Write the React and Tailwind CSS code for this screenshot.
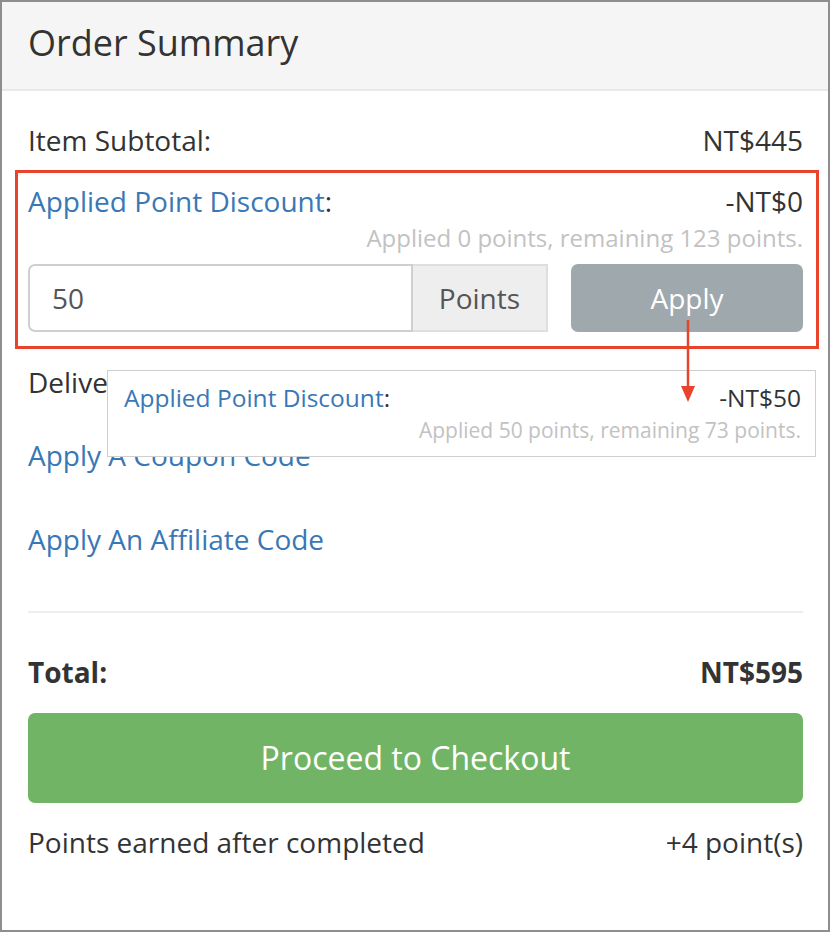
import React from "react";

export default function App() {
  const font = { fontFamily: '"Open Sans", "Noto Sans", sans-serif' };
  return (
    <div
      className="relative w-[830px] h-[932px] border-2 border-[#8e8e8e] bg-white text-[#333] overflow-hidden"
      style={font}
    >
      {/* Header */}
      <div className="h-[89px] bg-[#f5f5f5] border-b-2 border-[#e9e9e9] pl-[26px] pt-[21px]">
        <div className="text-[36px] leading-[40px]">Order Summary</div>
      </div>

      {/* Body */}
      <div className="pl-[26px] pr-[25px] pt-[29px] text-[28px] leading-[40px]">
        <div className="flex justify-between">
          <span>Item Subtotal:</span>
          <span>NT$445</span>
        </div>

        <div className="mt-[10px] -ml-[13px] -mr-[16px] border-[3px] border-[#e8432b] pl-[10px] pr-[13px] pt-[8px] pb-[14px]">
          <div className="flex justify-between">
            <span>
              <span className="text-[#3a77b5]">Applied Point Discount</span>:
            </span>
            <span>-NT$0</span>
          </div>
          <div className="text-right text-[24px] leading-[34px] text-[#c2c2c2]">
            Applied 0 points, remaining 123 points.
          </div>
          <div className="mt-[9px] flex h-[68px]">
            <div className="w-[385px] h-full border-2 border-[#cfcfcf] rounded-l-[7px] pl-[22px] flex items-center text-[28px] text-[#555]">
              50
            </div>
            <div className="w-[135px] h-full border-2 border-l-0 border-[#dedede] bg-[#eeeeee] flex items-center justify-center text-[28px] text-[#555]">
              Points
            </div>
            <div className="ml-[23px] flex-1 h-full rounded-[7px] bg-[#9fa8ad] flex items-center justify-center text-[28px] text-white">
              Apply
            </div>
          </div>
        </div>

        <div className="mt-[13px] flex justify-between">
          <span>Delivery Fee:</span>
        </div>

        <div className="mt-[33px] text-[#3a77b5]">Apply A Coupon Code</div>
        <div className="mt-[44px] text-[#3a77b5]">Apply An Affiliate Code</div>

        <div className="mt-[52px] border-t-2 border-[#eeeeee]" />

        <div className="mt-[39px] flex justify-between font-bold">
          <span>Total:</span>
          <span>NT$595</span>
        </div>

        <div className="mt-[21px] h-[90px] rounded-[7px] bg-[#72b466] flex items-center justify-center text-[32px] text-white">
          Proceed to Checkout
        </div>

        <div className="mt-[19px] flex justify-between">
          <span>Points earned after completed</span>
          <span>+4 point(s)</span>
        </div>
      </div>

      {/* Overlay result card */}
      <div className="absolute left-[105px] top-[368px] w-[709px] h-[87px] bg-white border border-[#cfcfcf] pl-[16px] pr-[14px] pt-[9px]">
        <div className="flex justify-between text-[24.5px] leading-[35px]">
          <span>
            <span className="text-[#3a77b5]">Applied Point Discount</span>:
          </span>
          <span>-NT$50</span>
        </div>
        <div className="text-right text-[21px] leading-[30px] text-[#c2c2c2]">
          Applied 50 points, remaining 73 points.
        </div>
      </div>

      {/* Arrow annotation */}
      <svg
        className="absolute left-[678px] top-[318px]"
        width="16"
        height="82"
        viewBox="0 0 16 82"
      >
        <line x1="8" y1="0" x2="8" y2="68" stroke="#e8432b" strokeWidth="2.5" />
        <polygon points="1,66 15,66 8,82" fill="#e8432b" />
      </svg>
    </div>
  );
}
